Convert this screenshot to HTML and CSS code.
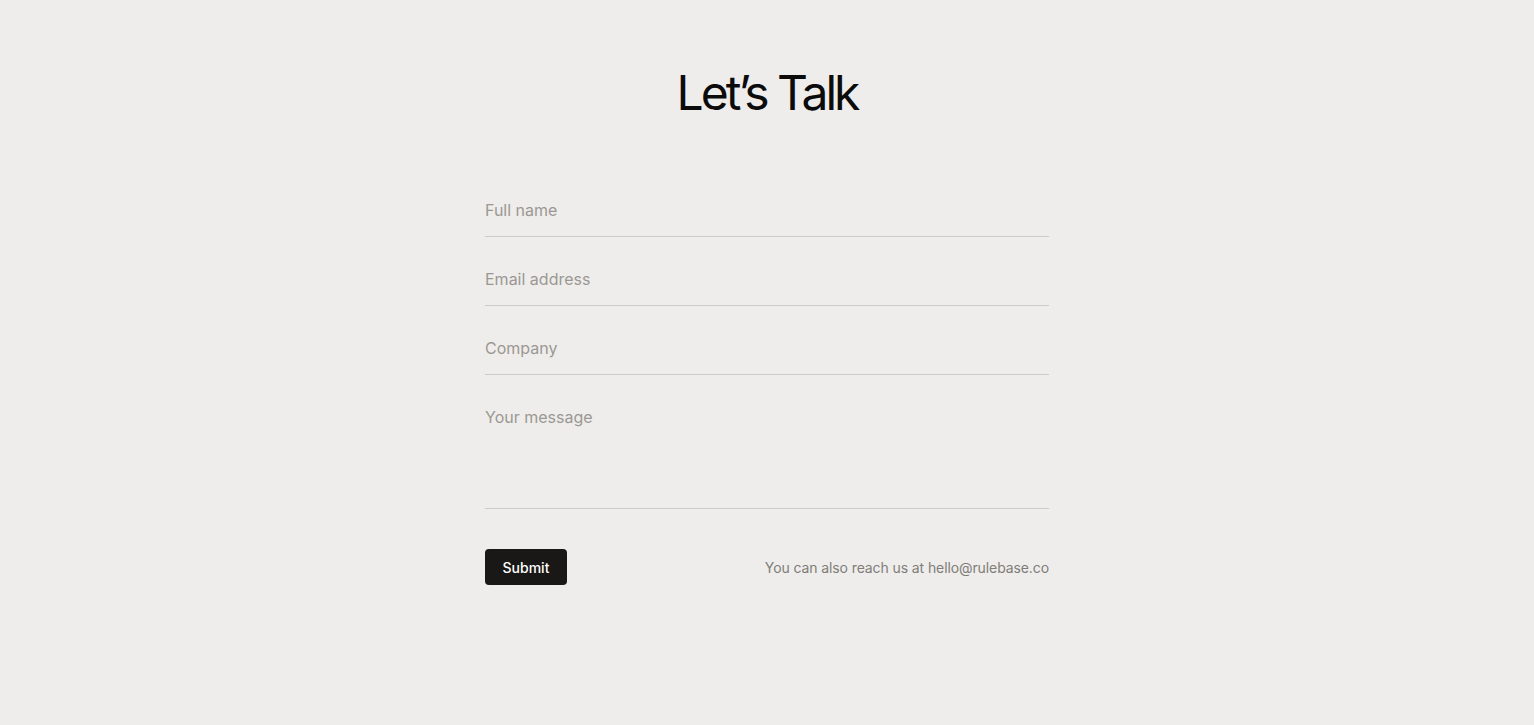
FILE: index.html
```html
<!DOCTYPE html>
<html lang="en">
<head>
<meta charset="utf-8">
<title>Let’s Talk</title>
<link rel="stylesheet" href="styles.css">
</head>
<body>
<main class="page">
  <h1 class="title">Let’s Talk</h1>
  <form class="form">
    <input class="field" type="text" placeholder="Full name">
    <input class="field" type="email" placeholder="Email address">
    <input class="field" type="text" placeholder="Company">
    <textarea class="field field-message" placeholder="Your message"></textarea>
    <div class="actions">
      <button class="submit" type="button">Submit</button>
      <p class="note">You can also reach us at hello@rulebase.co</p>
    </div>
  </form>
</main>
</body>
</html>
```

FILE: styles.css
```css
* { box-sizing: border-box; }
html, body {
  margin: 0;
  padding: 0;
  background: #eeedeb;
  font-family: Inter, "Noto Sans", sans-serif;
  color: #111;
}
.page {
  display: flex;
  flex-direction: column;
  align-items: center;
  padding-top: 64px;
}
.title {
  margin: 0;
  font-size: 48px;
  line-height: 58px;
  font-weight: 400;
  letter-spacing: -3px;
  color: #0b0b0b;
}
.form {
  width: 564px;
  margin-top: 64px;
  display: flex;
  flex-direction: column;
  gap: 18px;
}
.field {
  display: block;
  width: 100%;
  margin: 0;
  padding: 12px 0 14px;
  height: 51px;
  border: none;
  border-bottom: 1px solid #cdcbc8;
  background: transparent;
  font-family: inherit;
  font-size: 16px;
  line-height: 24px;
  color: #222;
  outline: none;
  resize: none;
}
.field::placeholder { color: #9b9894; opacity: 1; }
.field-message { height: 116px; }
.actions {
  display: flex;
  justify-content: space-between;
  align-items: center;
  margin-top: 22px;
}
.submit {
  height: 36px;
  width: 82px;
  padding: 0;
  border: none;
  border-radius: 4px;
  background: #1a1816;
  color: #fff;
  font-family: inherit;
  font-size: 14px;
  font-weight: 500;
}
.note {
  margin: 0;
  font-size: 14px;
  letter-spacing: -0.1px;
  color: #807d79;
}
```
